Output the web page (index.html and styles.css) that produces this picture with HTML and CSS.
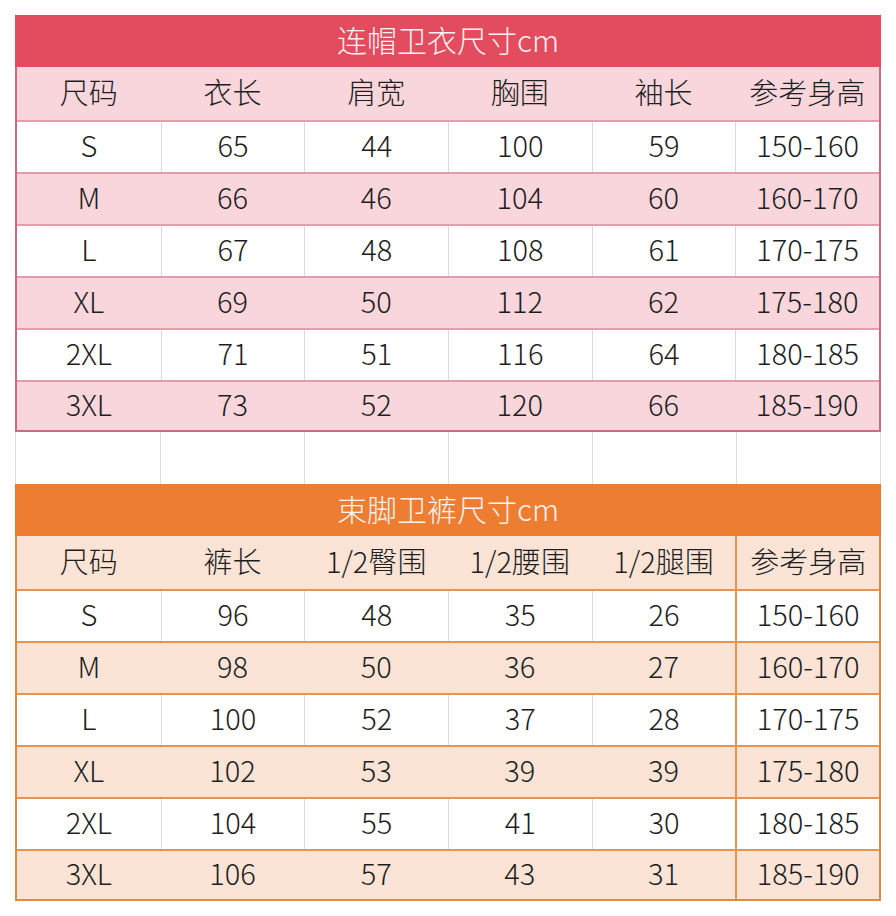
FILE: index.html
```html
<!DOCTYPE html>
<html lang="zh-CN">
<head>
<meta charset="utf-8">
<title>尺寸表</title>
<link rel="stylesheet" href="styles.css">
</head>
<body>
<div class="sheet">
  <section class="chart chart-red">
    <div class="title">连帽卫衣尺寸cm</div>
    <div class="row head"><div>尺码</div><div>衣长</div><div>肩宽</div><div>胸围</div><div>袖长</div><div>参考身高</div></div>
    <div class="row plain"><div>S</div><div>65</div><div>44</div><div>100</div><div>59</div><div>150-160</div></div>
    <div class="row tint"><div>M</div><div>66</div><div>46</div><div>104</div><div>60</div><div>160-170</div></div>
    <div class="row plain"><div>L</div><div>67</div><div>48</div><div>108</div><div>61</div><div>170-175</div></div>
    <div class="row tint"><div>XL</div><div>69</div><div>50</div><div>112</div><div>62</div><div>175-180</div></div>
    <div class="row plain"><div>2XL</div><div>71</div><div>51</div><div>116</div><div>64</div><div>180-185</div></div>
    <div class="row tint last"><div>3XL</div><div>73</div><div>52</div><div>120</div><div>66</div><div>185-190</div></div>
  </section>
  <div class="row spacer"><div></div><div></div><div></div><div></div><div></div><div></div></div>
  <section class="chart chart-orange">
    <div class="title">束脚卫裤尺寸cm</div>
    <div class="row head"><div>尺码</div><div>裤长</div><div>1/2臀围</div><div>1/2腰围</div><div>1/2腿围</div><div class="sep">参考身高</div></div>
    <div class="row plain"><div>S</div><div>96</div><div>48</div><div>35</div><div>26</div><div class="sep">150-160</div></div>
    <div class="row tint"><div>M</div><div>98</div><div>50</div><div>36</div><div>27</div><div class="sep">160-170</div></div>
    <div class="row plain"><div>L</div><div>100</div><div>52</div><div>37</div><div>28</div><div class="sep">170-175</div></div>
    <div class="row tint"><div>XL</div><div>102</div><div>53</div><div>39</div><div>39</div><div class="sep">175-180</div></div>
    <div class="row plain"><div>2XL</div><div>104</div><div>55</div><div>41</div><div>30</div><div class="sep">180-185</div></div>
    <div class="row tint last"><div>3XL</div><div>106</div><div>57</div><div>43</div><div>31</div><div class="sep">185-190</div></div>
  </section>
</div>
</body>
</html>
```

FILE: styles.css
```css
* { box-sizing: border-box; }

html, body {
  margin: 0;
  padding: 0;
  background: #ffffff;
}

body {
  font-family: "Noto Sans CJK SC", "Open Sans", sans-serif;
  font-weight: 200;
  color: #1e1e1e;
}

.sheet {
  width: 866px;
  margin: 15px 0 0 15px;
}

.chart {
  border-left: 2px solid var(--edge);
  border-right: 2px solid var(--edge);
  border-bottom: 2px solid var(--edge);
}

.chart-red {
  --title: #e24c5e;
  --tint: #f9d6dc;
  --line: #e79cab;
  --edge: #cd6a80;
}

.chart-orange {
  --title: #ed7d31;
  --tint: #fbe4d5;
  --line: #e5964f;
  --edge: #e08a45;
}

.title {
  height: 52px;
  margin: 0 -2px;
  padding-bottom: 4px;
  background: var(--title);
  color: #fff2f2;
  font-size: 30px;
  line-height: 48px;
  text-align: center;
  font-weight: 300;
}

.row {
  display: grid;
  grid-template-columns: repeat(6, 1fr);
  height: 52px;
}

.row > div {
  display: flex;
  align-items: center;
  justify-content: center;
  padding-bottom: 5px;
  font-size: 29px;
  line-height: 1;
}

.chart .row { border-top: 2px solid var(--line); }
.chart .row.head { border-top: none; height: 53px; }
.chart .row.last { height: 50px; }

.head, .tint { background: var(--tint); }

.plain { background: #ffffff; }
.plain > div + div { border-left: 1px solid #dadada; }

.chart .row > .sep { border-left: 2px solid var(--line); }

.spacer {
  height: 52px;
  border-left: 1px solid #dedede;
  border-right: 1px solid #dedede;
}
.spacer > div + div { border-left: 1px solid #dedede; }
```
